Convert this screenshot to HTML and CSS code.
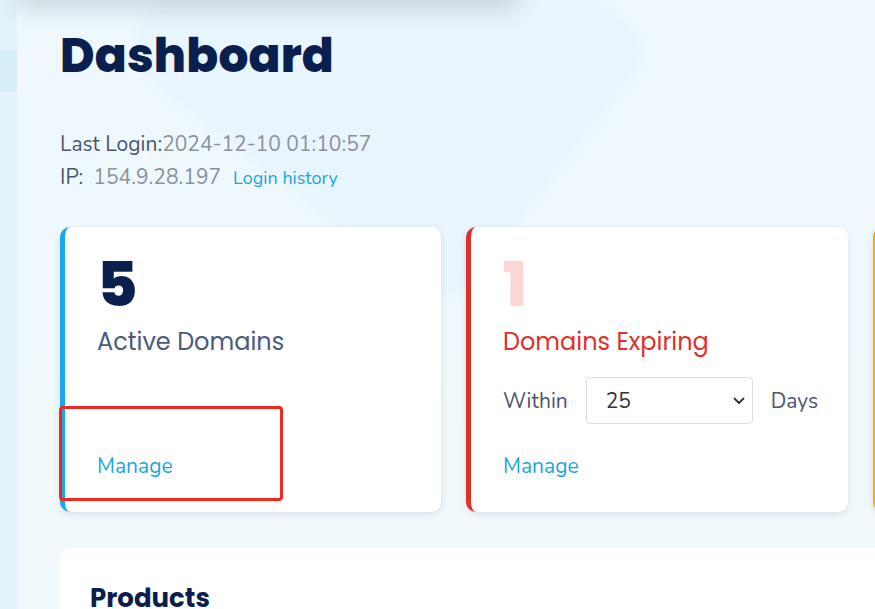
FILE: index.html
```html
<!DOCTYPE html>
<html lang="en">
<head>
<meta charset="utf-8">
<title>Dashboard</title>
<link rel="stylesheet" href="styles.css">
</head>
<body>
<div class="top-shadow"></div>
<div class="layout">
  <aside class="sidebar"><div class="sidebar-active"></div></aside>
  <main class="main">
    <div class="bg-shape"></div>
    <h1 class="page-title">Dashboard</h1>
    <div class="login-info">
      <div class="login-line"><span class="label">Last Login:</span><span class="value">2024-12-10 01:10:57</span></div>
      <div class="login-line"><span class="label">IP:</span><span class="value ip">154.9.28.197</span><a class="history-link" href="#">Login history</a></div>
    </div>
    <div class="cards">
      <section class="stat-card card-blue">
        <div class="stat-number">5</div>
        <div class="stat-title">Active Domains</div>
        <div class="stat-spacer"></div>
        <a class="manage-link" href="#">Manage</a>
        <div class="highlight-box"></div>
      </section>
      <section class="stat-card card-red">
        <div class="stat-number pale">1</div>
        <div class="stat-title red">Domains Expiring</div>
        <div class="within-row">
          <span class="within-label">Within</span>
          <div class="select-box">
            <span class="select-value">25</span>
            <svg class="chevron" width="12" height="8" viewBox="0 0 12 8"><path d="M1.5 1.5 L6 6 L10.5 1.5" fill="none" stroke="#333" stroke-width="1.8" stroke-linecap="round" stroke-linejoin="round"/></svg>
          </div>
          <span class="within-label">Days</span>
        </div>
        <a class="manage-link" href="#">Manage</a>
      </section>
      <section class="stat-card card-orange"></section>
    </div>
    <section class="products-card">
      <h2 class="products-title">Products</h2>
    </section>
  </main>
</div>
</body>
</html>
```
FILE: styles.css
```css
* { box-sizing: border-box; }
html, body { margin: 0; padding: 0; }
body {
  width: 875px;
  height: 609px;
  overflow: hidden;
  background: #eef8fd;
  font-family: "Nunito", "Lato", "Noto Sans", sans-serif;
  position: relative;
}
.top-shadow {
  position: absolute;
  left: 20px;
  top: -40px;
  width: 495px;
  height: 40px;
  border-radius: 10px;
  box-shadow: 0 4px 22px 6px rgba(60, 70, 90, 0.18);
  z-index: 5;
}
.layout {
  display: flex;
  height: 100%;
}
.sidebar {
  width: 17px;
  flex: none;
  background: #e4f3fb;
  padding-top: 50px;
}
.sidebar-active {
  height: 42px;
  background: #d5eefa;
}
.main {
  flex: 1;
  position: relative;
  padding: 24px 0 0 43px;
  background: linear-gradient(180deg, #eef8fd 0%, #f1f8fc 100%);
  overflow: hidden;
}
.bg-shape {
  position: absolute;
  left: 160px;
  top: -120px;
  width: 420px;
  height: 340px;
  border-radius: 40px;
  background: rgba(228, 243, 252, 0.55);
  transform: rotate(38deg);
  filter: blur(4px);
}
.page-title {
  position: relative;
  margin: 0;
  font-family: "Poppins", "Inter", sans-serif;
  font-weight: 800;
  font-size: 47px;
  line-height: 64px;
  color: #0b1f4f;
  letter-spacing: 0.2px;
}
.login-info {
  position: relative;
  margin-top: 40px;
  font-size: 21px;
  line-height: 33px;
}
.login-line .label { color: #4c5570; }
.login-line .value { color: #8d919b; }
.login-line .ip { margin-left: 10px; }
.history-link {
  margin-left: 12px;
  font-size: 18px;
  color: #1aa6e0;
  text-decoration: none;
}
.cards {
  position: relative;
  margin-top: 32px;
  display: grid;
  grid-template-columns: 381px 382px 381px;
  column-gap: 25px;
}
.stat-card {
  position: relative;
  height: 285px;
  background: #fff;
  border-radius: 10px;
  border-left: 5px solid #17a9e6;
  box-shadow: 0 2px 6px rgba(40, 60, 90, 0.12);
  padding: 26px 30px 32px 32px;
  display: flex;
  flex-direction: column;
}
.card-red { border-left-color: #e0302a; }
.card-orange { border-left-color: #f5ab00; }
.stat-number {
  font-family: "Poppins", "Inter", sans-serif;
  font-weight: 800;
  font-size: 62px;
  line-height: 64px;
  color: #0b1f4f;
}
.stat-number.pale { color: #fbd6d4; }
.stat-title {
  margin-top: 8px;
  font-family: "Poppins", "Inter", sans-serif;
  font-weight: 400;
  font-size: 24px;
  line-height: 34px;
  color: #4a5a80;
}
.stat-title.red { color: #e0302a; }
.stat-spacer { flex: 1; }
.within-row {
  margin-top: 18px;
  display: flex;
  align-items: center;
  gap: 18px;
}
.within-label {
  font-size: 21px;
  color: #4c5570;
}
.select-box {
  width: 167px;
  height: 47px;
  border: 1px solid #dcdfe6;
  border-radius: 4px;
  display: flex;
  align-items: center;
  justify-content: space-between;
  padding: 0 7px 0 19px;
}
.select-value {
  font-size: 21px;
  color: #333;
}
.manage-link {
  margin-top: auto;
  font-size: 21px;
  color: #1aa6e0;
  text-decoration: none;
}
.highlight-box {
  position: absolute;
  left: -6px;
  top: 179px;
  width: 224px;
  height: 95px;
  border: 3px solid #f0281e;
  border-radius: 4px;
}
.products-card {
  position: relative;
  margin-top: 36px;
  width: 900px;
  height: 200px;
  background: #fff;
  border-radius: 10px;
  padding: 30px 30px;
}
.products-title {
  margin: 0;
  font-family: "Poppins", "Inter", sans-serif;
  font-weight: 700;
  font-size: 26px;
  line-height: 40px;
  color: #0b1f4f;
}
```
